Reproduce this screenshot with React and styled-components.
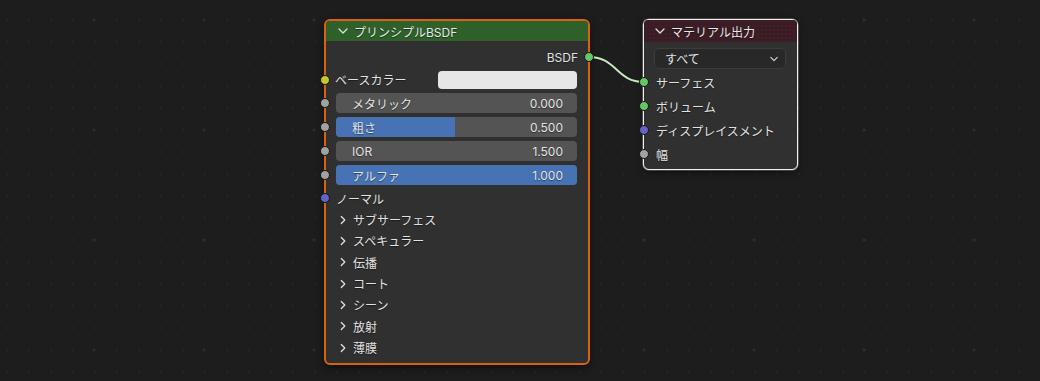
import React from 'react'
import styled, { createGlobalStyle } from 'styled-components'

const GlobalStyle = createGlobalStyle`
  body {
    margin: 0;
    background: #1d1d1d;
    font-family: "Inter", "Noto Sans CJK JP", sans-serif;
    font-size: 12px;
    color: #e0e0e0;
  }
`

const Canvas = styled.div`
  position: relative;
  width: 1040px;
  height: 381px;
  overflow: hidden;
  background-color: #1d1d1d;
  background-image:
    radial-gradient(circle, #2c2c2c 1.3px, transparent 1.8px),
    radial-gradient(circle, #252525 0.9px, transparent 1.3px);
  background-size: 110px 110px, 22px 22px;
  background-position: 39px -35px, -4px 9px;
`

const Node = styled.div`
  position: absolute;
  left: ${p => p.$x}px;
  top: ${p => p.$y}px;
  width: ${p => p.$w}px;
  box-sizing: border-box;
  background: #303030;
  border: ${p => (p.$active ? '2px solid #d9610f' : '1px solid #f0f0f0')};
  border-radius: 6px;
  box-shadow: ${p => (p.$active ? '' : '0 0 0 0.6px rgba(255,255,255,0.4),')} 0 3px 8px rgba(0, 0, 0, 0.45);
`

const Header = styled.div`
  display: flex;
  align-items: center;
  gap: 6px;
  height: ${p => p.$h}px;
  padding-left: ${p => p.$pad}px;
  background-color: ${p => p.$color};
  background-image: radial-gradient(circle, rgba(255,255,255,0.025) 0.6px, transparent 0.9px);
  background-size: 4px 4px;
  border-radius: 4px 4px 0 0;
  color: #e8e8e8;
  text-shadow: 0 1px 1px rgba(0, 0, 0, 0.5);
`

const Body = styled.div`
  display: flex;
  flex-direction: column;
  padding: ${p => p.$pad};
`

const Row = styled.div`
  position: relative;
  display: flex;
  align-items: center;
  justify-content: ${p => (p.$right ? 'flex-end' : 'flex-start')};
  height: ${p => p.$h || 22}px;
  padding: 0 ${p => p.$pr || 0}px 0 ${p => p.$pl || 0}px;
  color: #e2e2e2;
  text-shadow: 0 1px 1px rgba(0, 0, 0, 0.45);
  white-space: nowrap;
`

const Socket = styled.span`
  position: absolute;
  top: 50%;
  ${p => (p.$side === 'right' ? `right: ${p.$off}px;` : `left: ${p.$off}px;`)}
  width: 10px;
  height: 10px;
  margin-top: -5px;
  box-sizing: border-box;
  border-radius: 50%;
  background: ${p => p.$color};
  border: 1px solid #161616;
  z-index: 2;
`

const ColorField = styled.div`
  margin-left: auto;
  width: 139px;
  height: 18px;
  border-radius: 4px;
  background: #e6e6e6;
`

const Slider = styled.div`
  position: relative;
  flex: 1;
  display: flex;
  align-items: center;
  justify-content: space-between;
  height: 20px;
  padding: 0 14px 0 16px;
  border-radius: 4px;
  overflow: hidden;
  background: #545454;
  color: #e4e4e4;
  & > span {
    position: relative;
  }
`

const Fill = styled.div`
  position: absolute;
  left: 0;
  top: 0;
  bottom: 0;
  background: #4772b3;
`

const Select = styled.div`
  display: flex;
  align-items: center;
  justify-content: space-between;
  height: 21px;
  margin: 0 11px 1px 10px;
  padding: 0 7px 0 10px;
  box-sizing: border-box;
  border: 1px solid #3c3c3c;
  border-radius: 5px;
  background: #282828;
  color: #e4e4e4;
`

const Link = styled.svg`
  position: absolute;
  left: 0;
  top: 0;
  pointer-events: none;
  z-index: 1;
`

const Chevron = ({ dir = 'down', size = 10 }) => (
  <svg width={size} height={size} viewBox="0 0 10 10" fill="none" stroke="#dedede" strokeWidth="1.3" strokeLinecap="round" strokeLinejoin="round">
    {dir === 'down' ? <polyline points="1,3 5,7 9,3" /> : <polyline points="3.3,1.5 6.8,5 3.3,8.5" />}
  </svg>
)

const sliders = [
  { label: 'メタリック', value: '0.000', fill: 0 },
  { label: '粗さ', value: '0.500', fill: 0.495 },
  { label: 'IOR', value: '1.500', fill: 0 },
  { label: 'アルファ', value: '1.000', fill: 1 },
]

const panels = ['サブサーフェス', 'スペキュラー', '伝播', 'コート', 'シーン', '放射', '薄膜']

const outputs = [
  { label: 'サーフェス', color: '#63c763' },
  { label: 'ボリューム', color: '#63c763' },
  { label: 'ディスプレイスメント', color: '#6363c7' },
  { label: '幅', color: '#a1a1a1' },
]

export default function App() {
  return (
    <Canvas>
      <GlobalStyle />
      <Link width="1040" height="381">
        <path d="M589 57 C 617 57, 616 82, 644 82" stroke="#1a1a1a" strokeWidth="4" fill="none" />
        <path d="M589 57 C 617 57, 616 82, 644 82" stroke="#c6e6bd" strokeWidth="2" fill="none" />
      </Link>

      <Node $x={324} $y={19} $w={266} $active>
        <Header $h={20} $pad={12} $color="#2e6029">
          <Chevron />
          <span>プリンシプルBSDF</span>
        </Header>
        <Body $pad="5px 0 5px 0">
          <Row $right $pr={10}>
            BSDF
            <Socket $side="right" $off={-6} $color="#63c763" />
          </Row>
          <Row $h={23} $pl={9} $pr={11}>
            <Socket $off={-6} $color="#c7c729" />
            ベースカラー
            <ColorField />
          </Row>
          {sliders.map(s => (
            <Row key={s.label} $h={24} $pl={10} $pr={11}>
              <Socket $off={-6} $color="#a1a1a1" />
              <Slider>
                <Fill style={{ width: `${s.fill * 100}%` }} />
                <span>{s.label}</span>
                <span>{s.value}</span>
              </Slider>
            </Row>
          ))}
          <Row $pl={10}>
            <Socket $off={-6} $color="#6363c7" />
            ノーマル
          </Row>
          {panels.map(p => (
            <Row key={p} $h={21.33} $pl={12}>
              <Chevron dir="right" />
              <span style={{ marginLeft: 5 }}>{p}</span>
            </Row>
          ))}
        </Body>
      </Node>

      <Node $x={643} $y={19} $w={155}>
        <Header $h={22} $pad={11} $color="#3b1c25">
          <Chevron />
          <span>マテリアル出力</span>
        </Header>
        <Body $pad="6px 0 3px 0">
          <Select>
            <span>すべて</span>
            <Chevron size={8} />
          </Select>
          {outputs.map(o => (
            <Row key={o.label} $h={24} $pl={12}>
              <Socket $off={-5.5} $color={o.color} />
              {o.label}
            </Row>
          ))}
        </Body>
      </Node>
    </Canvas>
  )
}
